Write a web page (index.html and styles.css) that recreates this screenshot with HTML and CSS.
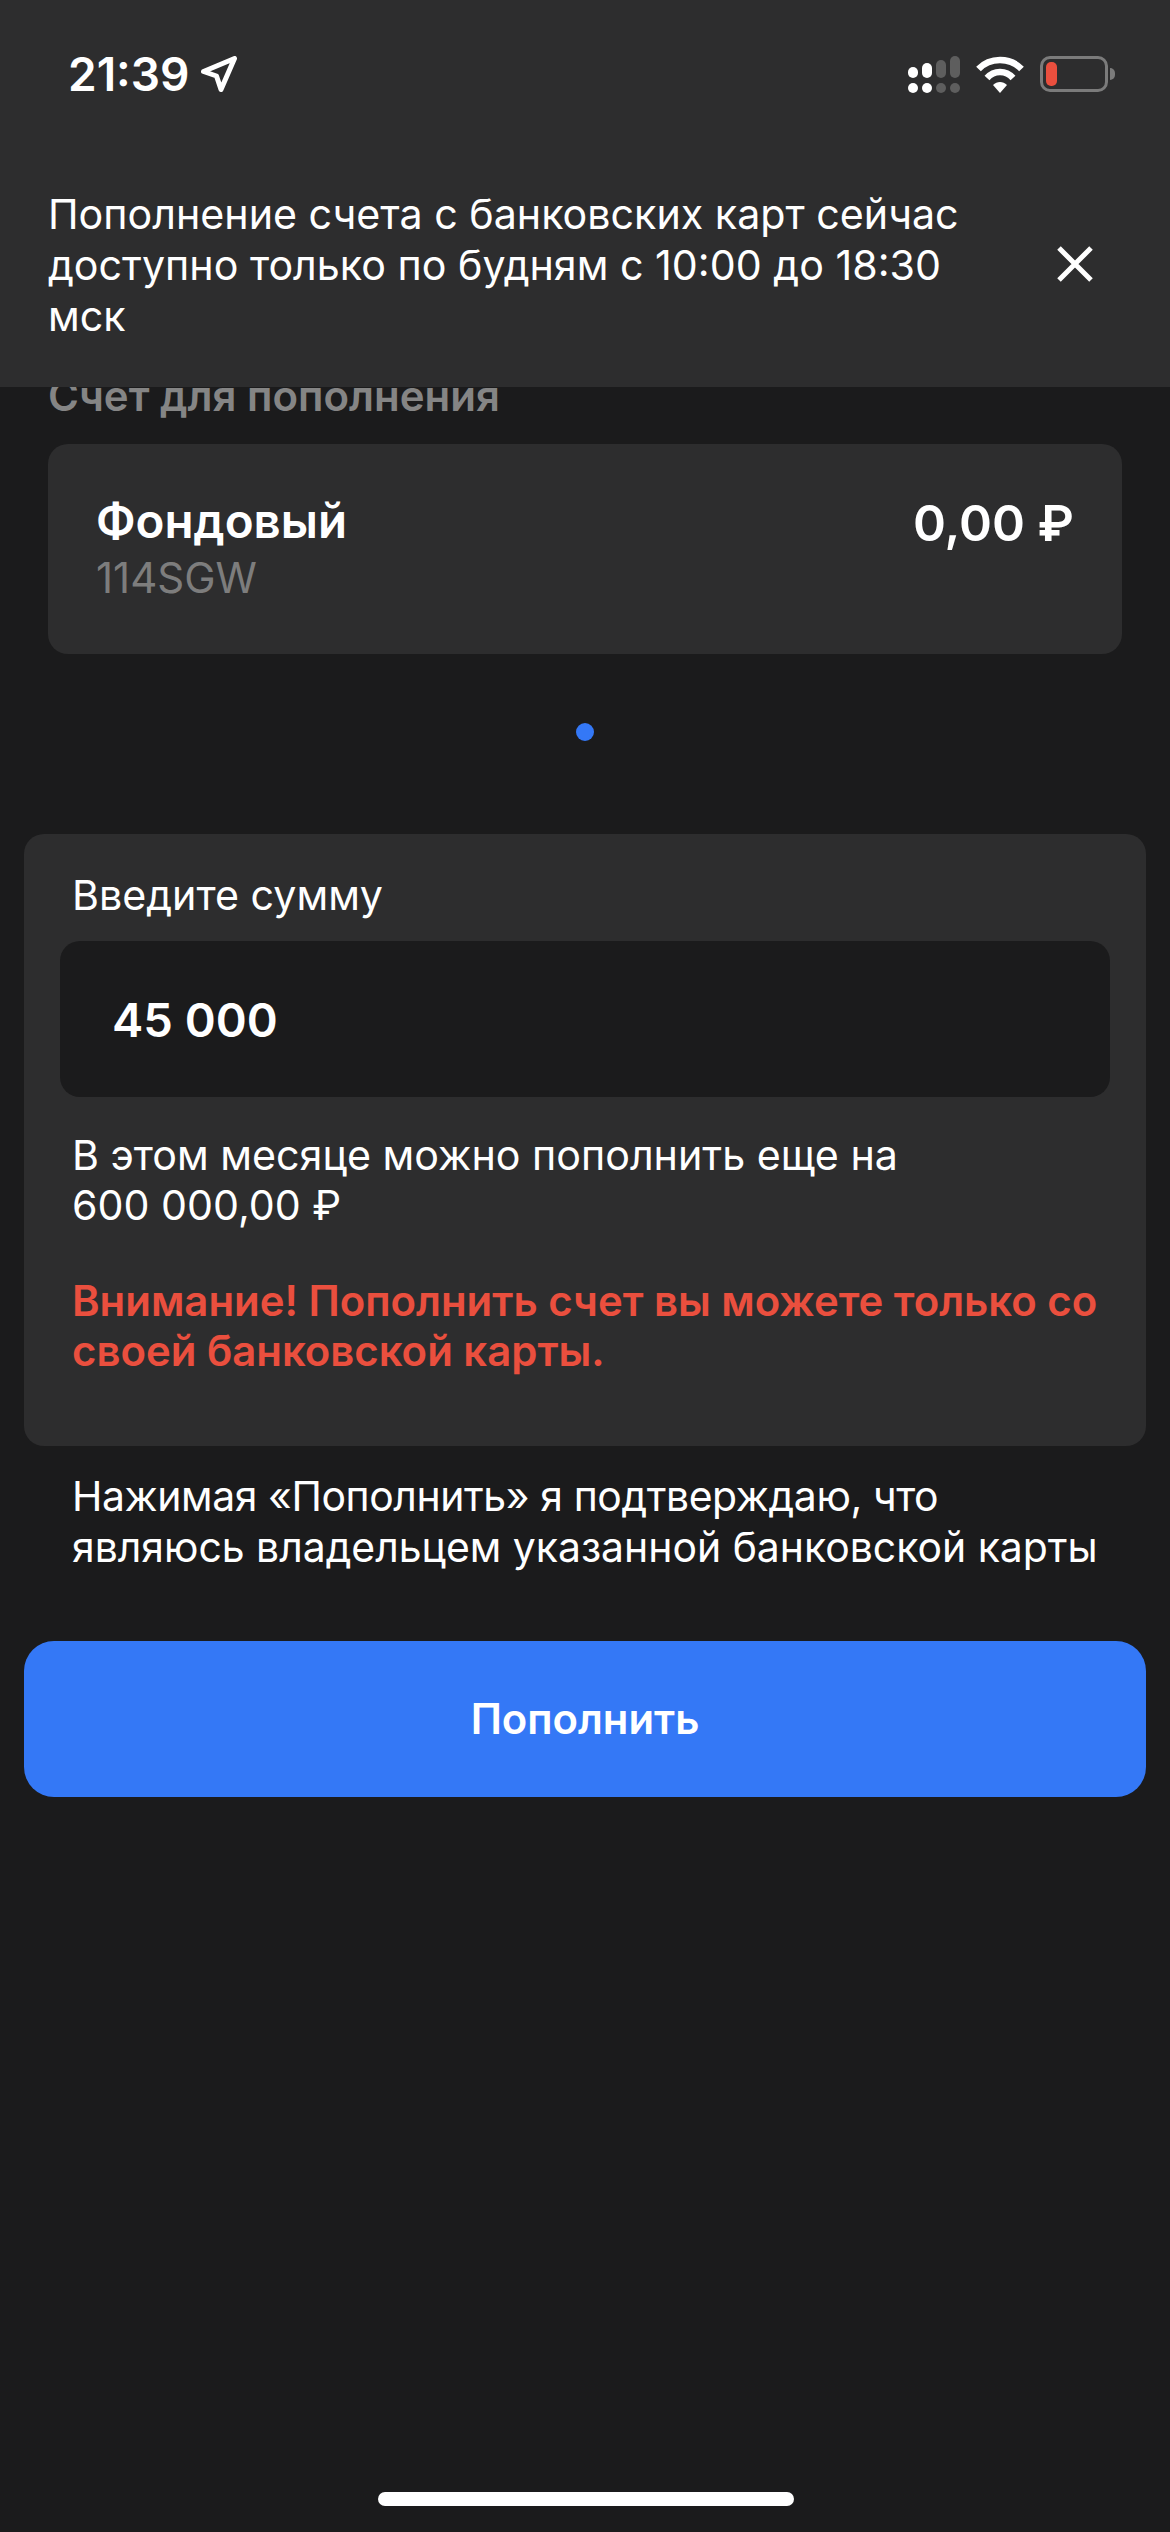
FILE: index.html
```html
<!DOCTYPE html>
<html lang="ru">
<head>
  <meta charset="UTF-8">
  <meta name="viewport" content="width=device-width, initial-scale=1.0">
  <title>Пополнение счета</title>
  <link rel="stylesheet" href="styles.css">
</head>
<body>

  <div class="top-overlay">
    <div class="status-bar">
      <div class="status-time">
        <span>21:39</span>
        <svg class="location-icon" width="36" height="36" viewBox="0 0 36 36">
          <path d="M2.5 15.5 L33.5 2.5 L20 33.5 L15.5 20 Z" fill="none" stroke="#fff" stroke-width="5" stroke-linejoin="round"/>
        </svg>
      </div>
      <div class="status-icons">
        <svg width="52" height="37" viewBox="0 0 52 37">
          <rect x="0" y="11" width="10" height="11" rx="5" fill="#fff"/>
          <rect x="14" y="7" width="10" height="15" rx="5" fill="#fff"/>
          <rect x="28" y="4" width="10" height="18" rx="5" fill="#5e5e5e"/>
          <rect x="42" y="0" width="10" height="22" rx="5" fill="#5e5e5e"/>
          <rect x="0" y="27" width="10" height="10" rx="5" fill="#fff"/>
          <rect x="14" y="27" width="10" height="10" rx="5" fill="#fff"/>
          <rect x="28" y="27" width="10" height="10" rx="5" fill="#5e5e5e"/>
          <rect x="42" y="27" width="10" height="10" rx="5" fill="#5e5e5e"/>
        </svg>
        <svg width="48" height="37" viewBox="0 0 48 37">
          <path d="M2.5 13 C14 1 34 1 45.5 13" fill="none" stroke="#fff" stroke-width="6.5"/>
          <path d="M11 22 C18 14 30 14 37 22" fill="none" stroke="#fff" stroke-width="6.5"/>
          <path d="M17 29 C21 25 27 25 31 29 L24 37 Z" fill="#fff"/>
        </svg>
        <div class="battery">
          <div class="battery-body"><div class="battery-level"></div></div>
          <div class="battery-tip"></div>
        </div>
      </div>
    </div>

    <div class="notice">
      <p class="notice-text">Пополнение счета с банковских карт сейчас доступно только по будням с 10:00 до 18:30 мск</p>
      <svg class="notice-close" width="36" height="36" viewBox="0 0 36 36">
        <path d="M2 2 L34 34 M34 2 L2 34" stroke="#fff" stroke-width="5"/>
      </svg>
    </div>
  </div>

  <main class="content">
    <h2 class="section-title">Счет для пополнения</h2>

    <div class="account-card">
      <div>
        <div class="account-name">Фондовый</div>
        <div class="account-code">114SGW</div>
      </div>
      <div class="account-sum">0,00 ₽</div>
    </div>

    <div class="pager"><span class="pager-dot"></span></div>

    <section class="amount-card">
      <label class="amount-label" for="amount">Введите сумму</label>
      <input class="amount-input" id="amount" type="text" value="45 000">
      <p class="amount-limit">В этом месяце можно пополнить еще на<br>600 000,00 ₽</p>
      <p class="amount-warning">Внимание! Пополнить счет вы можете только со своей банковской карты.</p>
    </section>

    <p class="confirm-text"><span class="confirm-first">Нажимая «Пополнить» я подтверждаю, что</span><br>являюсь владельцем указанной банковской карты</p>

    <button class="submit-button">Пополнить</button>
  </main>

  <div class="home-indicator"></div>

</body>
</html>
```

FILE: styles.css
```css
* {
  box-sizing: border-box;
}

html, body {
  margin: 0;
  padding: 0;
}

body {
  position: relative;
  width: 1170px;
  height: 2532px;
  overflow: hidden;
  font-family: 'Inter', 'Roboto', sans-serif;
  background-color: #1b1b1c;
  color: #fff;
}

.top-overlay {
  position: absolute;
  top: 0;
  left: 0;
  width: 100%;
  height: 387px;
  background-color: #2d2d2e;
  z-index: 2;
}

.status-bar {
  display: flex;
  justify-content: space-between;
  align-items: center;
  height: 74px;
  margin-top: 37px;
  padding: 0 55px 0 68px;
}

.status-time {
  display: flex;
  align-items: center;
  gap: 12px;
  font-size: 46px;
  font-weight: 600;
}

.status-icons {
  display: flex;
  align-items: center;
  gap: 16px;
}

.battery {
  display: flex;
  align-items: center;
  gap: 2px;
}

.battery-body {
  width: 68px;
  height: 36px;
  padding: 3px;
  border: 3px solid #7b7b7b;
  border-radius: 10px;
}

.battery-level {
  width: 11px;
  height: 100%;
  background-color: #ea4f3e;
  border-radius: 5px;
}

.battery-tip {
  width: 5px;
  height: 12px;
  background-color: #7b7b7b;
  border-radius: 0 5px 5px 0;
}

.notice {
  display: flex;
  align-items: center;
  justify-content: space-between;
  margin-top: 78px;
  padding: 0 77px 0 48px;
}

.notice-text {
  width: 930px;
  margin: 0;
  font-size: 41.2px;
  line-height: 51px;
}

.notice-close {
  margin-bottom: 3px;
}

.content {
  display: flex;
  flex-direction: column;
  padding: 371px 24px 0;
}

.section-title {
  margin: 0 0 23px 24px;
  height: 50px;
  font-size: 42px;
  line-height: 50px;
  font-weight: 600;
  color: #858585;
}

.account-card {
  display: flex;
  justify-content: space-between;
  align-items: flex-start;
  height: 210px;
  margin: 0 24px;
  padding: 50px 48px 0;
  background-color: #2d2d2e;
  border-radius: 20px;
}

.account-name {
  font-size: 47.5px;
  line-height: 54px;
  font-weight: 600;
}

.account-code {
  margin-top: 5px;
  font-size: 42px;
  line-height: 50px;
  color: #7d7d7d;
}

.account-sum {
  margin-top: 2px;
  font-size: 50px;
  line-height: 54px;
  font-weight: 600;
}

.pager {
  display: flex;
  justify-content: center;
  margin-top: 69px;
  height: 111px;
}

.pager-dot {
  width: 18px;
  height: 18px;
  border-radius: 50%;
  background-color: #3478f6;
}

.amount-card {
  display: flex;
  flex-direction: column;
  height: 612px;
  padding: 36px 36px 0;
  background-color: #2d2d2e;
  border-radius: 20px;
}

.amount-label {
  padding-left: 12px;
  font-size: 41.2px;
  line-height: 50px;
}

.amount-input {
  height: 156px;
  margin-top: 21px;
  padding: 0 52px;
  font-family: inherit;
  font-size: 47px;
  font-weight: 600;
  color: #fff;
  background-color: #1b1b1c;
  border: none;
  border-radius: 20px;
  outline: none;
}

.amount-limit {
  margin: 33px 0 0;
  padding-left: 12px;
  font-size: 41.2px;
  line-height: 50px;
}

.amount-warning {
  margin: 46px 0 0;
  padding-left: 12px;
  font-size: 41.9px;
  line-height: 50px;
  font-weight: 600;
  color: #ea4f3e;
}

.confirm-text {
  margin: 25px 0 0 48px;
  font-size: 40.9px;
  line-height: 51px;
}

.confirm-first {
  letter-spacing: -0.4px;
}

.submit-button {
  height: 156px;
  margin-top: 68px;
  font-family: inherit;
  font-size: 41.8px;
  font-weight: 600;
  color: #fff;
  background-color: #3478f6;
  border: none;
  border-radius: 30px;
}

.home-indicator {
  position: absolute;
  left: 378px;
  bottom: 26px;
  width: 416px;
  height: 14px;
  border-radius: 7px;
  background-color: #fff;
}
```
